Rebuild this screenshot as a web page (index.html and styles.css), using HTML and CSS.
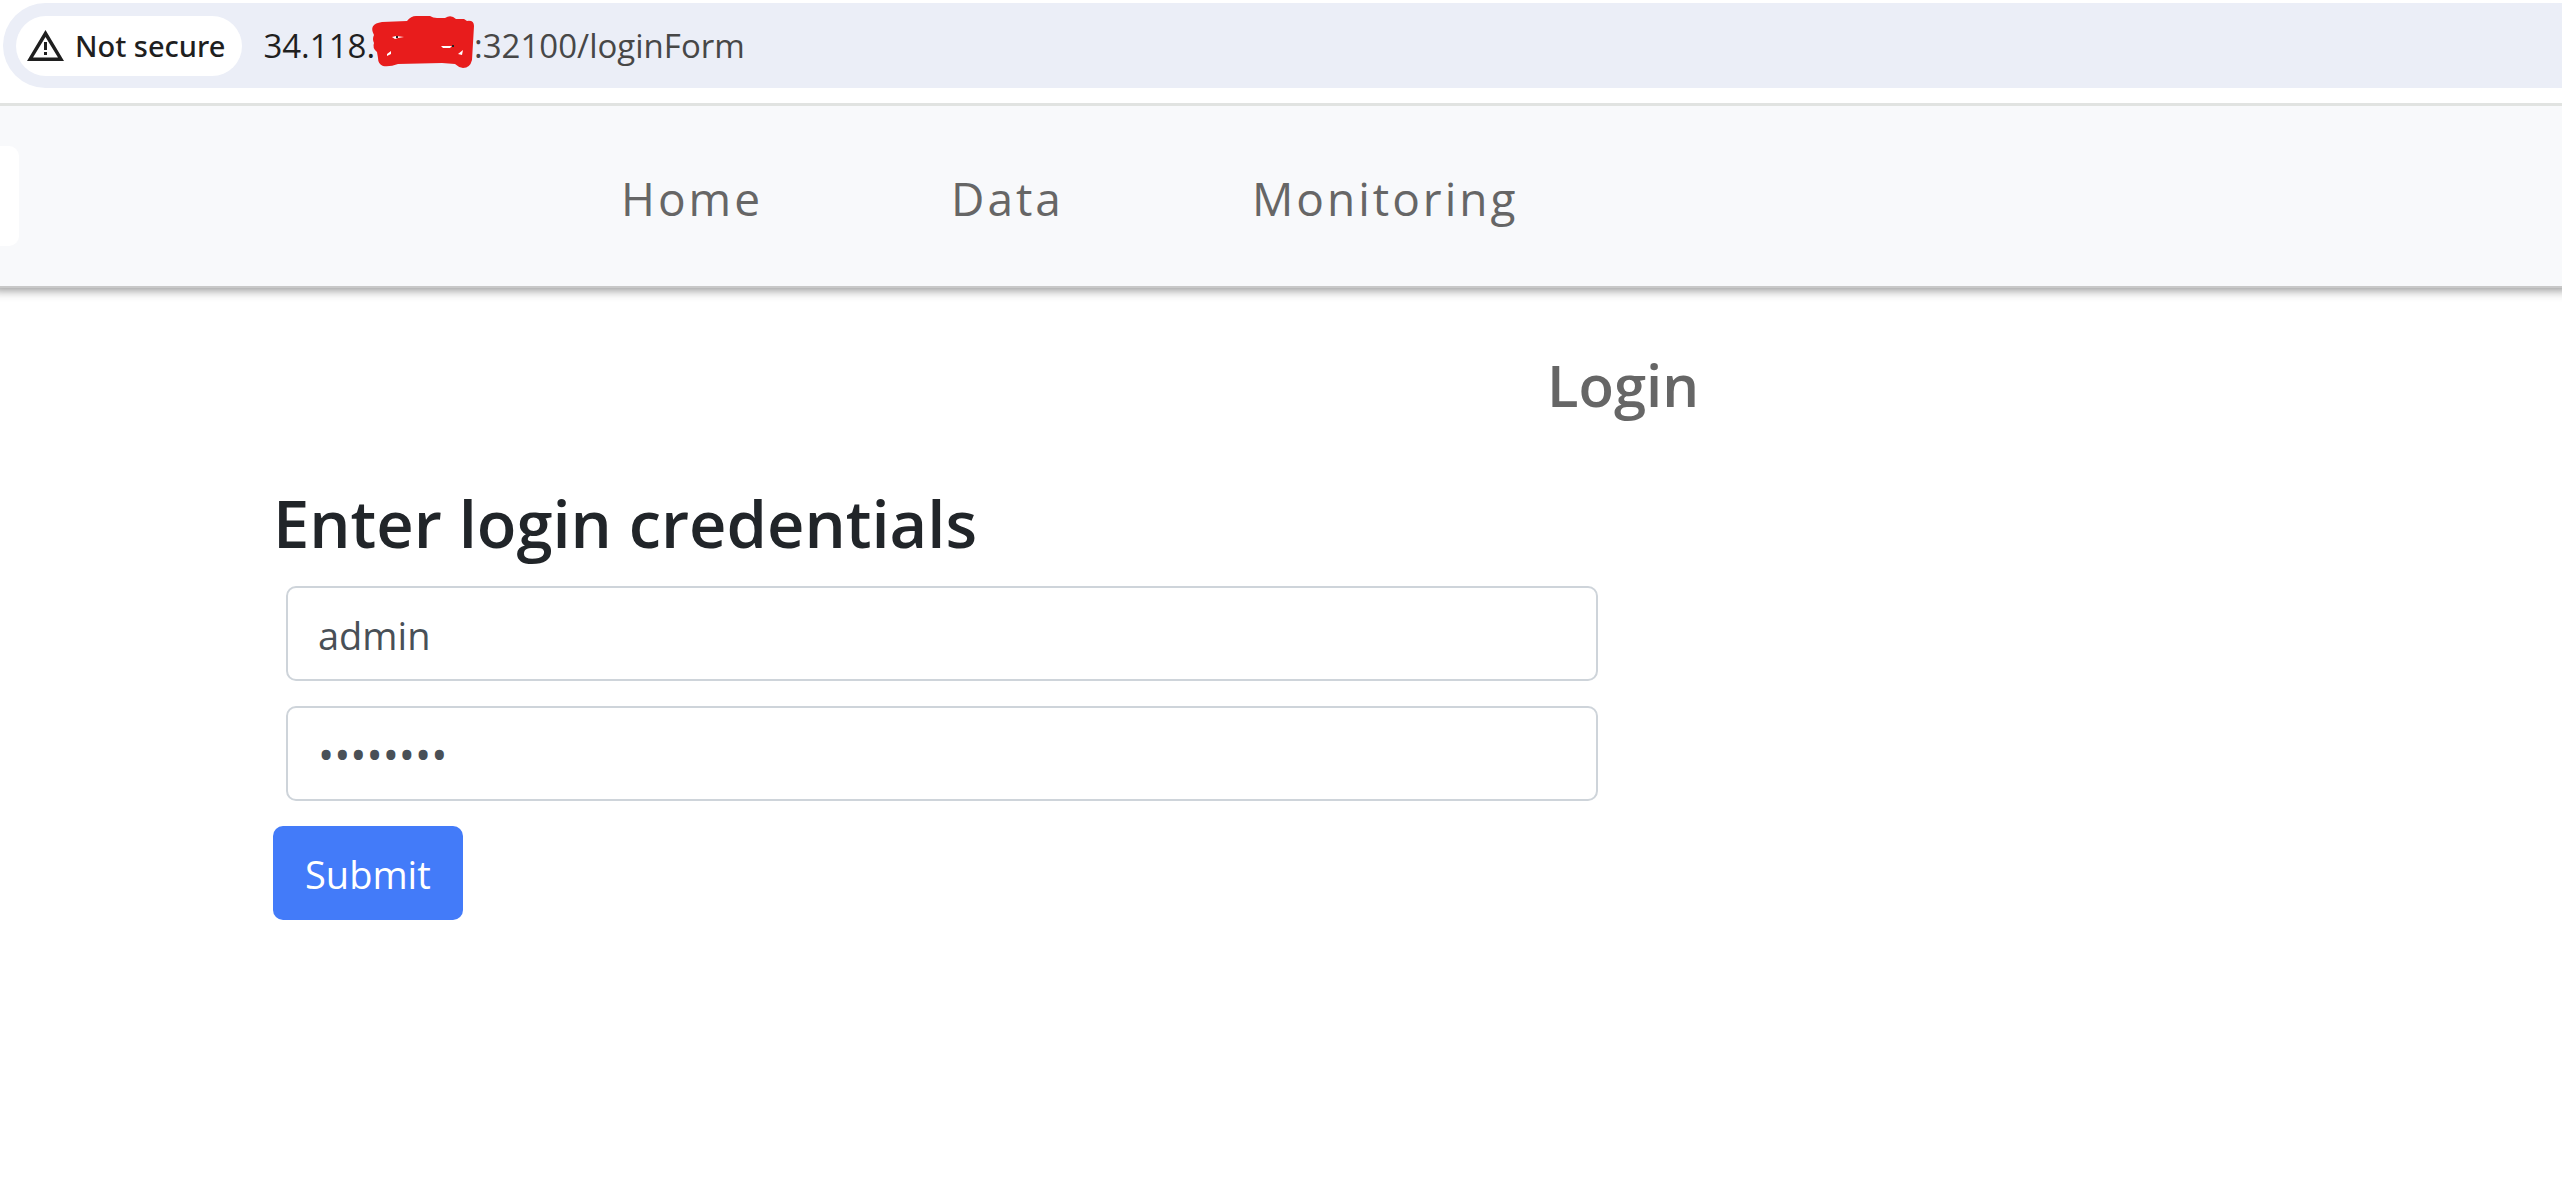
FILE: index.html
```html
<!DOCTYPE html>
<html lang="en">
<head>
<meta charset="utf-8">
<title>Login</title>
<link rel="stylesheet" href="styles.css">
</head>
<body>
<div class="toolbar">
  <div class="address-bar">
    <button class="security" type="button">
      <svg class="security-icon" viewBox="0 0 37 31" aria-hidden="true">
        <path d="M18.500 0L37 31H0ZM18.500 7L6 27.500H31Z" fill="#1f1f1f" fill-rule="evenodd"/>
        <path d="M17 12h3v8h-3zM17 22h3v3h-3z" fill="#1f1f1f"/>
      </svg>
      <span>Not secure</span>
    </button>
    <div class="url">
      <span class="url-host">34.118.</span>
      <svg class="redaction" viewBox="0 0 102 52" aria-hidden="true">
        <path d="M10 6L35 5Q39 0 44 0L58 0Q61 2 65 2L73 2Q79-2 84 3L92 3L95 5Q102 4 102 10L100 44Q98 52 91 52Q86 51 83 48L70 47L26 48Q18 51 11 50Q6 48 6 42L5 36Q0 32 2 27Q0 23 2 19Q-4 8 10 6Z" fill="#e81c1c"/>
        <path d="M20 21l4-1 8 1-6 1-3 1zM69 30h11l-2 2h-7zM15 38l4-3v3l-4 2zM86 38l5-4-1 5z" fill="#fff"/>
        <path d="M24 20h2v2h-2zM80 29h2v2h-2z" fill="#222"/>
      </svg>
      <span class="url-path">:32100/loginForm</span>
    </div>
  </div>
</div>
<header class="navbar">
  <div class="brand"></div>
  <nav class="nav-links">
    <a href="#">Home</a>
    <a href="#">Data</a>
    <a href="#">Monitoring</a>
  </nav>
</header>
<main class="content">
  <h2 class="page-title">Login</h2>
  <form class="login-form">
    <h1 class="form-title">Enter login credentials</h1>
    <input class="field" type="text" aria-label="Username" value="admin">
    <input class="field field-password" type="password" aria-label="Password" value="password">
    <button class="submit" type="button">Submit</button>
  </form>
</main>
</body>
</html>
```

FILE: styles.css
```css
* { box-sizing: border-box; }

body {
  margin: 0;
  background: #fff;
  color: #212529;
  font-family: "Open Sans", "Noto Sans", sans-serif;
  overflow-x: hidden;
}

button, input { font-family: inherit; }

.toolbar {
  position: relative;
  z-index: 1;
  padding: 3px 0 15px 3px;
  background: #fff;
  border-bottom: 3px solid #e1e3e1;
}

.address-bar {
  display: flex;
  align-items: center;
  gap: 21px;
  height: 85px;
  padding-left: 13px;
  background: #ebeef7;
  border-radius: 43px 0 0 43px;
}

.security {
  display: flex;
  align-items: center;
  gap: 11px;
  height: 60px;
  padding: 0 17px 0 11px;
  border: 0;
  border-radius: 30px;
  background: #fff;
  color: #1f1f1f;
  font-family: "Noto Sans", "Open Sans", sans-serif;
  font-size: 29px;
  font-weight: 500;
}

.security-icon { width: 37px; height: 31px; }

.url {
  display: flex;
  align-items: center;
  font-size: 33px;
}

.url-host { color: #1f1f1f; }
.url-path { color: #474747; }

.redaction {
  width: 102px;
  height: 52px;
  margin: 0 0 8px -3px;
  overflow: visible;
}

.navbar {
  position: relative;
  display: flex;
  align-items: center;
  height: 180px;
  background: #f8f9fb;
  box-shadow: 0 2px 0 #c8c8c8, 0 -4px 10px 8px rgba(0, 0, 0, 0.45);
}

.brand {
  width: 19px;
  height: 100px;
  background: #fff;
  border-radius: 0 10px 10px 0;
}

.nav-links {
  display: flex;
  gap: 188px;
  padding: 3px 0 0 602px;
}

.nav-links a {
  color: #666;
  font-size: 46px;
  letter-spacing: 3px;
  text-decoration: none;
}

.content { padding: 59px 0 0 273px; }

.page-title {
  margin: 0 0 25px 1274px;
  color: #666;
  font-size: 58px;
  font-weight: 600;
  line-height: 80px;
}

.login-form {
  display: flex;
  flex-direction: column;
  align-items: flex-start;
  gap: 25px;
  max-width: 1325px;
}

.form-title {
  margin: 33px 0 -2px;
  font-size: 65px;
  font-weight: 600;
  line-height: 80px;
}

.field {
  align-self: stretch;
  height: 95px;
  margin-left: 13px;
  padding: 2px 30px 0;
  border: 2px solid #ced4da;
  border-radius: 10px;
  background: #fff;
  color: #495057;
  font-size: 38px;
}

.field-password { font-size: 43px; }

.submit {
  height: 94px;
  padding: 2px 32px 0;
  border: 0;
  border-radius: 10px;
  background: #437bf9;
  color: #fff;
  font-size: 38px;
}
```
